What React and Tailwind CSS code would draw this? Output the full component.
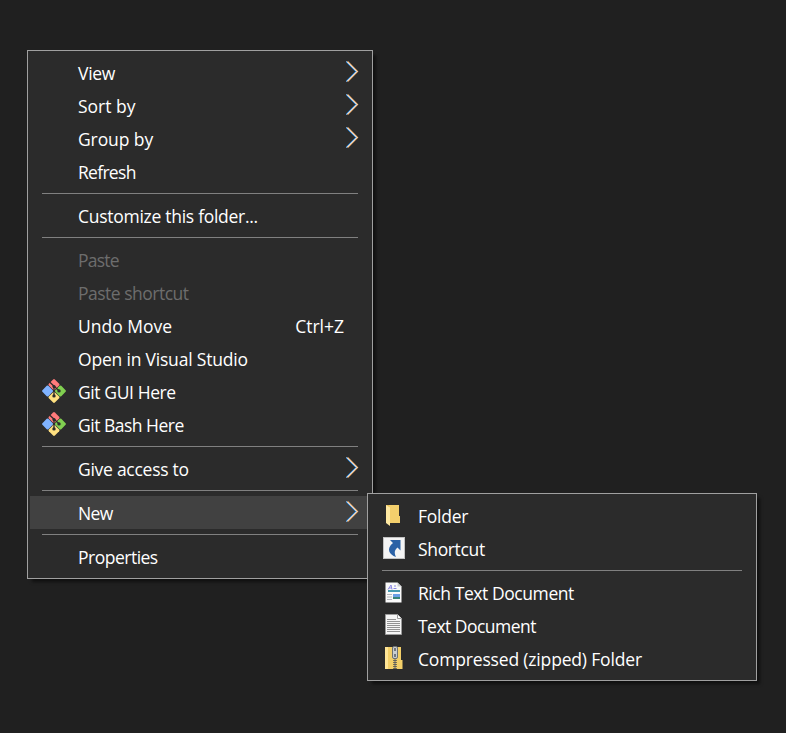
import React from "react";

function Chevron() {
  return (
    <svg className="absolute right-[11px] top-[4px] h-[23px] w-[13px]" viewBox="0 0 13 23" fill="none">
      <path d="M0.2 1.500 L10.2 11.500 L0.2 21.500" stroke="#2385e0" strokeWidth="1.2" />
      <path d="M1.6 1.500 L11.6 11.500 L1.6 21.500" stroke="#f0a55a" strokeWidth="1.2" />
      <path d="M0.9 1.500 L10.9 11.500 L0.9 21.500" stroke="#ffffff" strokeWidth="1" />
    </svg>
  );
}

function GitIcon() {
  return (
    <svg className="h-[26px] w-[26px]" viewBox="0 0 26 26">
      <g transform="rotate(45 13 13)">
        <rect x="4.2" y="4.2" width="8.500" height="8.500" rx="1.2" fill="#ff7b7b" />
        <rect x="13.3" y="4.2" width="8.500" height="8.500" rx="1.2" fill="#80cf50" />
        <rect x="4.2" y="13.3" width="8.500" height="8.500" rx="1.2" fill="#80b3ff" />
        <rect x="13.3" y="13.3" width="8.500" height="8.500" rx="1.2" fill="#ffe080" />
      </g>
      <path d="M8.800 4.200 L18 12.700 M13 8 V18" stroke="#2b2b2b" strokeWidth="1.3" />
      <circle cx="13" cy="8.600" r="1.600" fill="#2b2b2b" />
      <circle cx="18" cy="12.900" r="1.700" fill="#2b2b2b" />
      <circle cx="13" cy="17.900" r="1.700" fill="#2b2b2b" />
    </svg>
  );
}

function FolderIcon() {
  return (
    <svg className="h-6 w-6" viewBox="0 0 24 24">
      <path d="M4 2h13v11h1v7H8z" fill="#e8bd55" />
      <path d="M7 2h10v11h1v7H8z" fill="#f3cf6c" />
      <path d="M4 2 L8 4.500V23L4 20z" fill="#ffe9a2" />
    </svg>
  );
}

function ShortcutIcon() {
  return (
    <svg className="h-6 w-6" viewBox="0 0 24 24">
      <rect x="1.500" y="1.500" width="21" height="21" fill="#f4f4f4" stroke="#c2c2c2" />
      <path d="M8 4H18.500v10.500l-3-3c-3 2.500-3.500 5-1.500 9.500-7-2.500-10-8.500-3-14z" fill="#2b62a6" />
    </svg>
  );
}

function RichTextIcon() {
  return (
    <svg className="h-6 w-6" viewBox="0 0 24 24">
      <path d="M3.500 2.500h12l4 4V22.500h-16z" fill="#fafafa" />
      <path d="M15.500 2.500v4h4z" fill="#c9cbd0" />
      <path d="M6 9.500l3-4.500 1 4.500M7 8h3M12 6h2M11.500 8.500h3" stroke="#8b88e4" fill="none" />
      <rect x="6" y="10" width="12" height="2" fill="#469ab0" />
      <path d="M5 14.500h5M5 17h5M5 19.500h5" stroke="#b1b6bb" />
      <rect x="11" y="14" width="7" height="3" fill="#6b9fe6" />
      <rect x="11" y="17" width="7" height="2" fill="#388478" />
    </svg>
  );
}

function TextIcon() {
  return (
    <svg className="h-6 w-6" viewBox="0 0 24 24">
      <path d="M3.500 1.500h12l4 4v16h-16z" fill="#f6f6f6" stroke="#9b9b9b" />
      <path d="M15.500 1.500v4h4" fill="#fff" stroke="#9b9b9b" />
      <path d="M5 6.500h9M5 8.500h13M5 10.500h13M5 12.500h13M5 14.500h13M5 16.500h13M5 18.500h13" stroke="#929292" />
    </svg>
  );
}

function ZipIcon() {
  return (
    <svg className="h-6 w-6" viewBox="0 0 24 24">
      <path d="M3 1h16v13h1.500v9H3z" fill="#f3cf68" />
      <path d="M3 1h3v22H3z" fill="#ffe596" />
      <path d="M13 12v11" stroke="#5a5a55" strokeWidth="3.600" strokeDasharray="1 1" />
      <path d="M13 12v11" stroke="#666" />
      <rect x="10.500" y="0.500" width="5" height="12" rx="1.500" fill="#c9cdd0" stroke="#6c7073" />
      <path d="M13 2v3M13 8v3" stroke="#555b60" strokeWidth="1.500" />
    </svg>
  );
}

function Item({ label, tracking = "", icon, shortcut, arrow, disabled, active }) {
  return (
    <div className={`relative mx-[2px] flex h-[33px] items-center pr-[26px] ${active ? "bg-[#414141]" : ""} ${disabled ? "text-[#6d6d6d]" : "text-white"}`}>
      <span className="flex w-12 shrink-0 items-center justify-center pb-px">{icon}</span>
      <span className={`whitespace-pre ${tracking}`}>{label}</span>
      {shortcut && <span className="ml-auto">{shortcut}</span>}
      {arrow && <Chevron />}
    </div>
  );
}

function Separator() {
  return <div className="mx-[14px] my-[5px] h-px bg-[#808080]" />;
}

function Menu({ className, children }) {
  return (
    <div className={`absolute border border-[#a0a0a0] bg-[#2b2b2b] py-[5px] shadow-[4px_4px_3px_-1px_rgba(0,0,0,0.5)] ${className}`}>
      {children}
    </div>
  );
}

export default function App() {
  return (
    <div className="relative h-[733px] w-[786px] overflow-hidden bg-[#202020] font-['Open_Sans','Noto_Sans',sans-serif] text-[17.5px] leading-6">
      <Menu className="left-[27px] top-[50px] w-[346px]">
        <Item label="View" tracking="tracking-[-0.3px]" arrow />
        <Item label="Sort by" arrow />
        <Item label="Group by" tracking="tracking-[-0.1px]" arrow />
        <Item label="Refresh" tracking="tracking-[-0.7px]" />
        <Separator />
        <Item label="Customize this folder..." tracking="tracking-[-0.28px]" />
        <Separator />
        <Item label="Paste" tracking="tracking-[-0.8px]" disabled />
        <Item label="Paste shortcut" tracking="tracking-[-0.5px]" disabled />
        <Item label="Undo Move" shortcut="Ctrl+Z" />
        <Item label="Open in Visual Studio" tracking="tracking-[-0.2px]" />
        <Item label="Git GUI Here" tracking="tracking-[-0.4px]" icon={<GitIcon />} />
        <Item label="Git Bash Here" tracking="tracking-[-0.5px]" icon={<GitIcon />} />
        <Separator />
        <Item label="Give access to" tracking="tracking-[-0.27px]" arrow />
        <Separator />
        <Item label="New" tracking="tracking-[-0.6px]" arrow active />
        <Separator />
        <Item label="Properties" tracking="tracking-[-0.5px]" />
      </Menu>
      <Menu className="left-[367px] top-[493px] w-[390px]">
        <Item label="Folder" tracking="tracking-[-0.25px]" icon={<FolderIcon />} />
        <Item label="Shortcut" tracking="tracking-[-0.35px]" icon={<ShortcutIcon />} />
        <Separator />
        <Item label="Rich Text Document" tracking="tracking-[-0.43px]" icon={<RichTextIcon />} />
        <Item label="Text Document" tracking="tracking-[-0.53px]" icon={<TextIcon />} />
        <Item label="Compressed (zipped) Folder" tracking="tracking-[-0.17px]" icon={<ZipIcon />} />
      </Menu>
    </div>
  );
}
